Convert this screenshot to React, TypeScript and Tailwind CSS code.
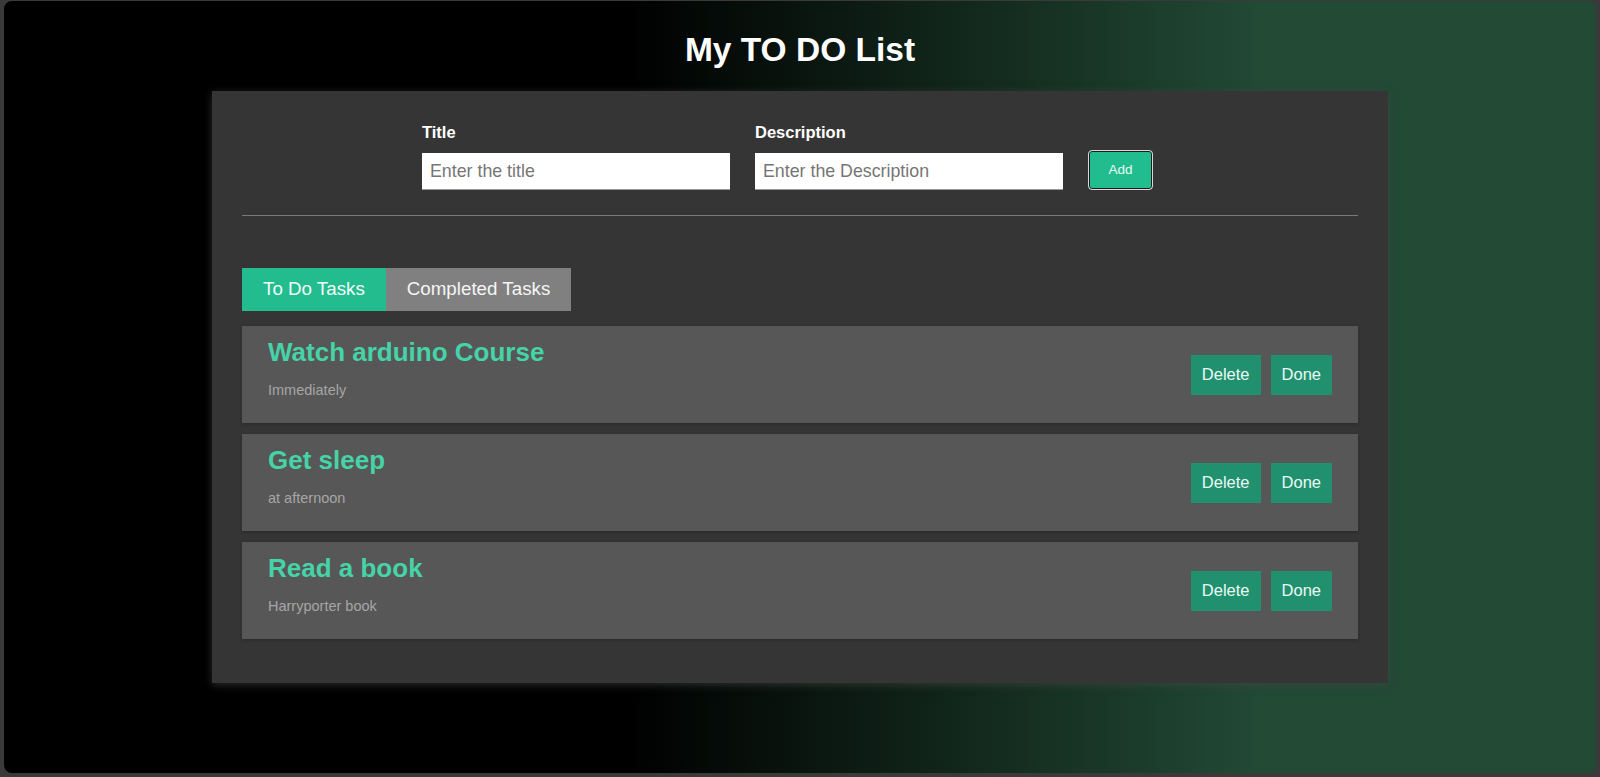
import React from "react";

interface Task {
  title: string;
  description: string;
}

const tasks: Task[] = [
  { title: "Watch arduino Course", description: "Immediately" },
  { title: "Get sleep", description: "at afternoon" },
  { title: "Read a book", description: "Harryporter book" },
];

const TaskRow: React.FC<{ task: Task }> = ({ task }) => {
  return (
    <div className="bg-[#575757] flex items-center justify-between pl-[26px] pr-[26px] pt-[12px] pb-[23px] shadow-[0_1px_3px_rgba(0,0,0,0.25)]">
      <div>
        <h3 className="text-[26px] leading-[28px] font-bold text-[#45d3a7]">{task.title}</h3>
        <p className="mt-[14px] text-[14.5px] leading-[20px] text-[#a6a6a6]">{task.description}</p>
      </div>
      <div className="flex gap-[10px] mt-[11px]">
        <button className="h-[40px] px-[11px] bg-[#21906f] text-[16.5px] text-[#eafaf4]">Delete</button>
        <button className="h-[40px] px-[11px] bg-[#21906f] text-[16.5px] text-[#eafaf4]">Done</button>
      </div>
    </div>
  );
};

export default function App() {
  return (
    <div className="h-screen w-full bg-[#3a3a3a] pt-[1px] px-[4px] pb-[4px] font-['Liberation_Sans',Arial,sans-serif]">
      <div className="h-full w-full rounded-[8px] overflow-hidden bg-[linear-gradient(to_right,#000_39%,#224a35_79%)] flex flex-col items-center">
        <h1 className="mt-[30px] text-[33.5px] leading-[37px] font-bold text-white">My TO DO List</h1>

        <div className="mt-[23px] w-[1176px] bg-[#353535] px-[30px] pt-[32px] pb-[44px] shadow-[0_2px_8px_rgba(70,70,70,0.6)]">
          {/* form */}
          <div className="flex justify-center items-end gap-[25px] pr-[25px]">
            <div className="flex flex-col">
              <label className="text-[16.5px] leading-[18px] font-bold text-white">Title</label>
              <input
                className="mt-[12px] w-[308px] h-[37px] bg-white border-b border-[#9a9a9a] px-[8px] text-[17.8px] text-[#333] placeholder:text-[#767676] outline-none"
                placeholder="Enter the title"
              />
            </div>
            <div className="flex flex-col">
              <label className="text-[16.5px] leading-[18px] font-bold text-white">Description</label>
              <input
                className="mt-[12px] w-[308px] h-[37px] bg-white border-b border-[#9a9a9a] px-[8px] text-[17.8px] text-[#333] placeholder:text-[#767676] outline-none"
                placeholder="Enter the Description"
              />
            </div>
            <button className="w-[65px] h-[40px] rounded-[4px] bg-[#22bd8f] border border-[#d8d8d8] shadow-[inset_0_0_0_1px_#1e1e1e] text-[13.5px] text-[#eafaf4]">
              Add
            </button>
          </div>

          <div className="mt-[25px] h-px bg-[#7a7a7a]" />

          {/* tabs */}
          <div className="mt-[52px] flex">
            <button className="h-[43px] px-[21px] bg-[#23bc8f] text-[18.75px] text-[#f2fbf8]">To Do Tasks</button>
            <button className="h-[43px] px-[21px] bg-[#808080] text-[18.75px] text-[#f5f5f5]">Completed Tasks</button>
          </div>

          <div className="mt-[15px] flex flex-col gap-[11px]">
            {tasks.map((t) => (
              <TaskRow key={t.title} task={t} />
            ))}
          </div>
        </div>
      </div>
    </div>
  );
}
